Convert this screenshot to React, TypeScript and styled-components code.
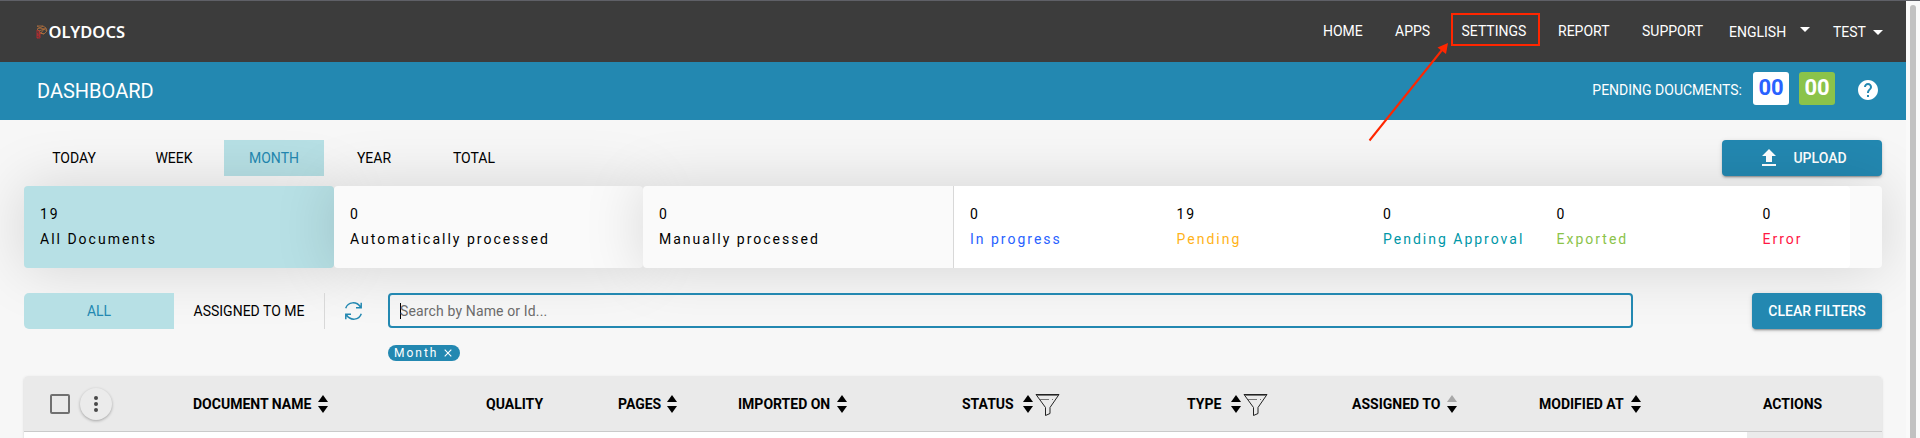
import React from "react";
import styled, { createGlobalStyle } from "styled-components";

const blue = "#2388b1";
const aqua = "#b7e0e5";

const GlobalStyle = createGlobalStyle`
  * { box-sizing: border-box; }
  html, body { margin: 0; padding: 0; overflow: hidden; background: #f7f7f7; }
  body { font-family: Roboto, "Liberation Sans", sans-serif; font-size: 14px; color: #000; }
  button { font: inherit; border: 0; padding: 0; }
`;

const Screen = styled.div`
  display: flex;
  width: 1920px;
  height: 438px;
  overflow: hidden;
  border-top: 1px solid #5f6067;
  position: relative;
`;
const Page = styled.div`
  width: 1906px;
  flex: none;
  background: #f7f7f7;
`;
const ScrollTrack = styled.div`
  flex: 1;
  padding: 4px 4px 0;
  background: #fafafa;
`;
const ScrollThumb = styled.div`
  width: 6px;
  height: 450px;
  border-radius: 3px;
  background: #c1c1c1;
`;

const Header = styled.header`
  height: 61px;
  display: flex;
  justify-content: space-between;
  padding-left: 36px;
  background: #3c3c3c;
  color: #fff;
`;
const Logo = styled.div`
  display: flex;
  align-items: center;
  gap: 0.5px;
  font: 600 16.5px/22px "Noto Sans", "Open Sans", sans-serif;
  letter-spacing: 0.08px;
`;
const Nav = styled.nav`
  display: flex;
  width: 583px;
`;
const NavItem = styled.a<{ $w: number; $drop?: number }>`
  width: ${(p) => p.$w}px;
  flex: none;
  display: flex;
  padding-top: ${(p) => 22 + (p.$drop || 0)}px;
  line-height: 16px;
  white-space: nowrap;
`;
const Caret = styled.i<{ $gap: number; $top: number }>`
  width: 10px;
  height: 5px;
  margin: ${(p) => p.$top}px 0 0 ${(p) => p.$gap}px;
  border: 5px solid transparent;
  border-top-color: #fff;
  border-bottom: 0;
`;

const TitleBar = styled.section`
  height: 58px;
  display: flex;
  align-items: flex-start;
  justify-content: space-between;
  padding: 10px 28px 0 37px;
  background: ${blue};
  color: #fff;
`;
const Title = styled.h1`
  margin: 8px 0 0;
  font-size: 20px;
  line-height: 23px;
  font-weight: 400;
`;
const Pending = styled.div`
  display: flex;
  align-items: flex-start;
`;
const PendingLabel = styled.span`
  margin: 10px 11px 0 0;
  line-height: 16px;
`;
const Counter = styled.span<{ $green?: boolean }>`
  width: 36px;
  height: 33px;
  margin-right: 10px;
  border-radius: 3px;
  text-align: center;
  font-size: 22px;
  font-weight: 700;
  line-height: 31px;
  background: ${(p) => (p.$green ? "#8bc34a" : "#fff")};
  color: ${(p) => (p.$green ? "#fff" : "#2962ff")};
`;
const HelpIcon = styled.svg`
  margin: 6px -2px 0 11px;
`;

const Content = styled.main`
  padding: 20px 24px 0;
`;
const Row = styled.div`
  display: flex;
  justify-content: space-between;
  height: 36px;
`;
const Tabs = styled.div`
  display: flex;
`;
const Tab = styled.button<{ $on?: boolean; $w?: number; $round?: boolean }>`
  width: ${(p) => p.$w || 100}px;
  height: 36px;
  background: ${(p) => (p.$on ? aqua : "transparent")};
  color: ${(p) => (p.$on ? blue : "#000")};
  border-radius: ${(p) => (p.$round ? "5px 0 0 5px" : 0)};
`;
const Action = styled.button<{ $w: number }>`
  width: ${(p) => p.$w}px;
  height: 36px;
  display: flex;
  align-items: center;
  justify-content: center;
  gap: 12px;
  border-radius: 4px;
  font-weight: 500;
  background: ${blue};
  color: #fff;
  box-shadow: 0 3px 1px -2px rgba(0, 0, 0, 0.2), 0 2px 2px rgba(0, 0, 0, 0.14), 0 1px 5px rgba(0, 0, 0, 0.12);
`;

const Stats = styled.section`
  display: flex;
  height: 82px;
  margin: 10px 0 25px;
`;
const Card = styled.div<{ $w: number; $bg: string }>`
  width: ${(p) => p.$w}px;
  flex: none;
  border-radius: 4px;
  background: ${(p) => p.$bg};
  box-shadow: 0 0 60px rgba(0, 0, 0, 0.15);
  display: flex;
`;
const StatusPanel = styled.div`
  width: 897px;
  display: flex;
  background: #fff;
  border-left: 1px solid #d8d8d8;
  border-radius: 0 4px 4px 0;
`;
const Stat = styled.div<{ $w: number; $color?: string }>`
  width: ${(p) => p.$w}px;
  flex: none;
  padding: 16px 0 0 16px;
  line-height: 25px;
  letter-spacing: 2px;
  white-space: nowrap;
  span { display: block; color: ${(p) => p.$color || "#000"}; }
`;

const Filters = styled.div`
  display: flex;
`;
const Assigned = styled(Tab)`
  border-right: 1px solid #d8d8d8;
`;
const RefreshIcon = styled.svg`
  margin: 9px 26.5px 0 19.5px;
`;
const Search = styled.div`
  width: 1245px;
  height: 35px;
  padding: 8px 10px 6px;
  border: 2px solid ${blue};
  border-radius: 4px;
  line-height: 17px;
  letter-spacing: 0.14px;
  color: #6b6b6b;
  &::before {
    content: "";
    display: inline-block;
    width: 1px;
    height: 16px;
    margin-right: -1px;
    vertical-align: -3px;
    background: #000;
  }
`;
const Chip = styled.div`
  display: flex;
  align-items: center;
  gap: 6px;
  width: 72px;
  height: 16px;
  margin: 16px 0 15px 364px;
  padding-left: 6px;
  border-radius: 8px;
  font-size: 12px;
  letter-spacing: 2px;
  background: ${blue};
  color: #fff;
`;

const Table = styled.section`
  width: 1858px;
  border-radius: 4px 4px 0 0;
  background: #fff;
  box-shadow: 0 2px 1px -1px rgba(0, 0, 0, 0.2), 0 1px 1px rgba(0, 0, 0, 0.14), 0 1px 3px rgba(0, 0, 0, 0.12);
`;
const TableHead = styled.div`
  display: flex;
  height: 56px;
  padding-top: 1px;
  border-bottom: 1px solid #cacaca;
  border-radius: 4px 4px 0 0;
  background: #eaeaea;
`;
const SelectCell = styled.div`
  width: 169px;
  flex: none;
  display: flex;
  align-items: center;
  gap: 10px;
  padding-left: 26px;
`;
const Checkbox = styled.span`
  width: 20px;
  height: 20px;
  border: 2px solid #707070;
  border-radius: 2px;
`;
const MoreButton = styled.button`
  width: 32px;
  height: 32px;
  display: flex;
  align-items: center;
  justify-content: center;
  border-radius: 50%;
  background: #ebebeb;
  box-shadow: 0 1px 3px rgba(0, 0, 0, 0.3);
`;
const HeadCell = styled.div<{ $w: number }>`
  width: ${(p) => p.$w}px;
  flex: none;
  display: flex;
  align-items: center;
  font-weight: 700;
  white-space: nowrap;
`;
const SortIcon = styled.svg<{ $gap: number }>`
  margin-left: ${(p) => p.$gap}px;
`;
const FunnelIcon = styled.svg`
  margin: 3px 0 0 1.5px;
`;
const BodyRow = styled.div`
  display: flex;
  justify-content: flex-end;
  height: 40px;
`;
const ActionCell = styled.div`
  width: 135px;
  background: #ebebeb;
`;
const Callout = styled.svg`
  position: absolute;
  left: 1360px;
  top: -1px;
`;

const statuses = [
  { w: 206.5, n: 0, label: "In progress", color: "#2962ff" },
  { w: 206.5, n: 19, label: "Pending", color: "#ffb319" },
  { w: 173.5, n: 0, label: "Pending Approval", color: "#0097a7" },
  { w: 206, n: 0, label: "Exported", color: "#8bc34a" },
  { w: 90, n: 0, label: "Error", color: "#ff1744" },
];

const columns = [
  { w: 293, label: "DOCUMENT NAME", gap: 7 },
  { w: 132, label: "QUALITY" },
  { w: 120, label: "PAGES", gap: 6 },
  { w: 224, label: "IMPORTED ON", gap: 7 },
  { w: 225, label: "STATUS", gap: 9.5, funnel: true },
  { w: 165, label: "TYPE", gap: 10, funnel: true },
  { w: 187, label: "ASSIGNED TO", gap: 7, dim: true },
  { w: 224, label: "MODIFIED AT", gap: 7 },
  { w: 119, label: "ACTIONS" },
];

function LogoMark() {
  return (
    <svg width="12" height="14" viewBox="0 0 12 14" fill="none" strokeWidth="0.8">
      <path d="M1 1L4 3L7 1L10 3L11 6L8 9L5 8L3 6L1 4L4 3L8 4L10 3M3 6L8 4L11 6M5 8L8 4M1 1H7M8 9L3 8" stroke="#b5713c" />
      <path d="M1 5L4 7L1 9L4 11L1 13H4V7M1 5V13M4 9L1 11" stroke="#c22a2e" />
    </svg>
  );
}

function Stack({ w, n, label, color }: { w: number; n: number; label: string; color?: string }) {
  return (
    <Stat $w={w} $color={color}>
      {n}
      <span>{label}</span>
    </Stat>
  );
}

export default function App() {
  return (
    <Screen>
      <GlobalStyle />
      <Page>
        <Header>
          <Logo><LogoMark />OLYDOCS</Logo>
          <Nav>
            <NavItem $w={72}>HOME</NavItem>
            <NavItem $w={66.5}>APPS</NavItem>
            <NavItem $w={96.5}>SETTINGS</NavItem>
            <NavItem $w={84}>REPORT</NavItem>
            <NavItem $w={87}>SUPPORT</NavItem>
            <NavItem $w={104} $drop={1}>ENGLISH<Caret $gap={14} $top={3} /></NavItem>
            <NavItem $w={60} $drop={1}>TEST<Caret $gap={7} $top={6} /></NavItem>
          </Nav>
        </Header>
        <TitleBar>
          <Title>DASHBOARD</Title>
          <Pending>
            <PendingLabel>PENDING DOUCMENTS:</PendingLabel>
            <Counter>00</Counter>
            <Counter $green>00</Counter>
            <HelpIcon width="24" height="24" viewBox="0 0 24 24" fill="#fff">
              <path d="M12 2C6.48 2 2 6.48 2 12s4.48 10 10 10 10-4.48 10-10S17.52 2 12 2zm1 17h-2v-2h2v2zm2.07-7.75l-.9.92C13.45 12.9 13 13.5 13 15h-2v-.5c0-1.1.45-2.1 1.17-2.83l1.24-1.26c.37-.36.59-.86.59-1.41 0-1.1-.9-2-2-2s-2 .9-2 2H8c0-2.21 1.79-4 4-4s4 1.79 4 4c0 .88-.36 1.68-.93 2.25z" />
            </HelpIcon>
          </Pending>
        </TitleBar>
        <Content>
          <Row>
            <Tabs>
              <Tab>TODAY</Tab>
              <Tab>WEEK</Tab>
              <Tab $on>MONTH</Tab>
              <Tab>YEAR</Tab>
              <Tab>TOTAL</Tab>
            </Tabs>
            <Action $w={160}>
              <svg width="24" height="24" viewBox="0 0 24 24" fill="#fff">
                <path d="M9 16h6v-6h4l-7-7-7 7h4zm-4 2h14v2H5z" />
              </svg>
              UPLOAD
            </Action>
          </Row>
          <Stats>
            <Card $w={310} $bg={aqua}><Stack w={300} n={19} label="All Documents" /></Card>
            <Card $w={309} $bg="#fafafa"><Stack w={300} n={0} label="Automatically processed" /></Card>
            <Card $w={1239} $bg="#fafafa">
              <Stack w={310} n={0} label="Manually processed" />
              <StatusPanel>
                {statuses.map((s) => <Stack key={s.label} {...s} />)}
              </StatusPanel>
            </Card>
          </Stats>
          <Row>
            <Filters>
              <Tab $on $w={150} $round>ALL</Tab>
              <Assigned $w={151}>ASSIGNED TO ME</Assigned>
              <RefreshIcon width="17" height="18" viewBox="0 0 17 18" fill="none" stroke={blue} strokeWidth="1.5">
                <path d="M.7 6.2C3-.4 11.500-1 15.500 5M16.200.8V5.700H11M16.300 11.800C14 18.400 5.500 19 1.500 13M.8 17.200V12.300H6" />
              </RefreshIcon>
              <Search>Search by Name or Id...</Search>
            </Filters>
            <Action $w={130}>CLEAR FILTERS</Action>
          </Row>
          <Chip>
            Month
            <svg width="8" height="8" viewBox="0 0 8 8" stroke="#fff" strokeWidth="1.1"><path d="M.7.7L7.300 7.300M7.300.7L.7 7.300" /></svg>
          </Chip>
          <Table>
            <TableHead>
              <SelectCell>
                <Checkbox />
                <MoreButton>
                  <svg width="4" height="16" viewBox="0 0 4 16" fill="#484848"><circle cx="2" cy="2" r="2" /><circle cx="2" cy="8" r="2" /><circle cx="2" cy="14" r="2" /></svg>
                </MoreButton>
              </SelectCell>
              {columns.map((c) => (
                <HeadCell key={c.label} $w={c.w}>
                  {c.label}
                  {c.gap && (
                    <SortIcon $gap={c.gap} width="10" height="18" viewBox="0 0 10 18">
                      <path d="M0 7L5 0L10 7Z" fill={c.dim ? "#a8a8a8" : "#000"} />
                      <path d="M0 11L5 18L10 11Z" />
                    </SortIcon>
                  )}
                  {c.funnel && (
                    <FunnelIcon width="25" height="23" viewBox="0 0 25 23" fill="none" stroke="#222">
                      <path d="M1 .5H24L15 13.500V19.500L10.500 21.500V13.500L1 .5Z" />
                      <path d="M2 1.500H23M5 5.500H14M17 5.500H18" stroke="#777" />
                    </FunnelIcon>
                  )}
                </HeadCell>
              ))}
            </TableHead>
            <BodyRow><ActionCell /></BodyRow>
          </Table>
        </Content>
      </Page>
      <ScrollTrack><ScrollThumb /></ScrollTrack>
      <Callout width="190" height="150" viewBox="0 0 190 150" fill="none" stroke="#ff2600" strokeWidth="2">
        <rect x="92" y="14" width="87" height="31" />
        <path d="M9.500 140.500L82 50" />
        <path d="M88 43L77.500 47.500L86 54Z" fill="#ff2600" stroke="none" />
      </Callout>
    </Screen>
  );
}
